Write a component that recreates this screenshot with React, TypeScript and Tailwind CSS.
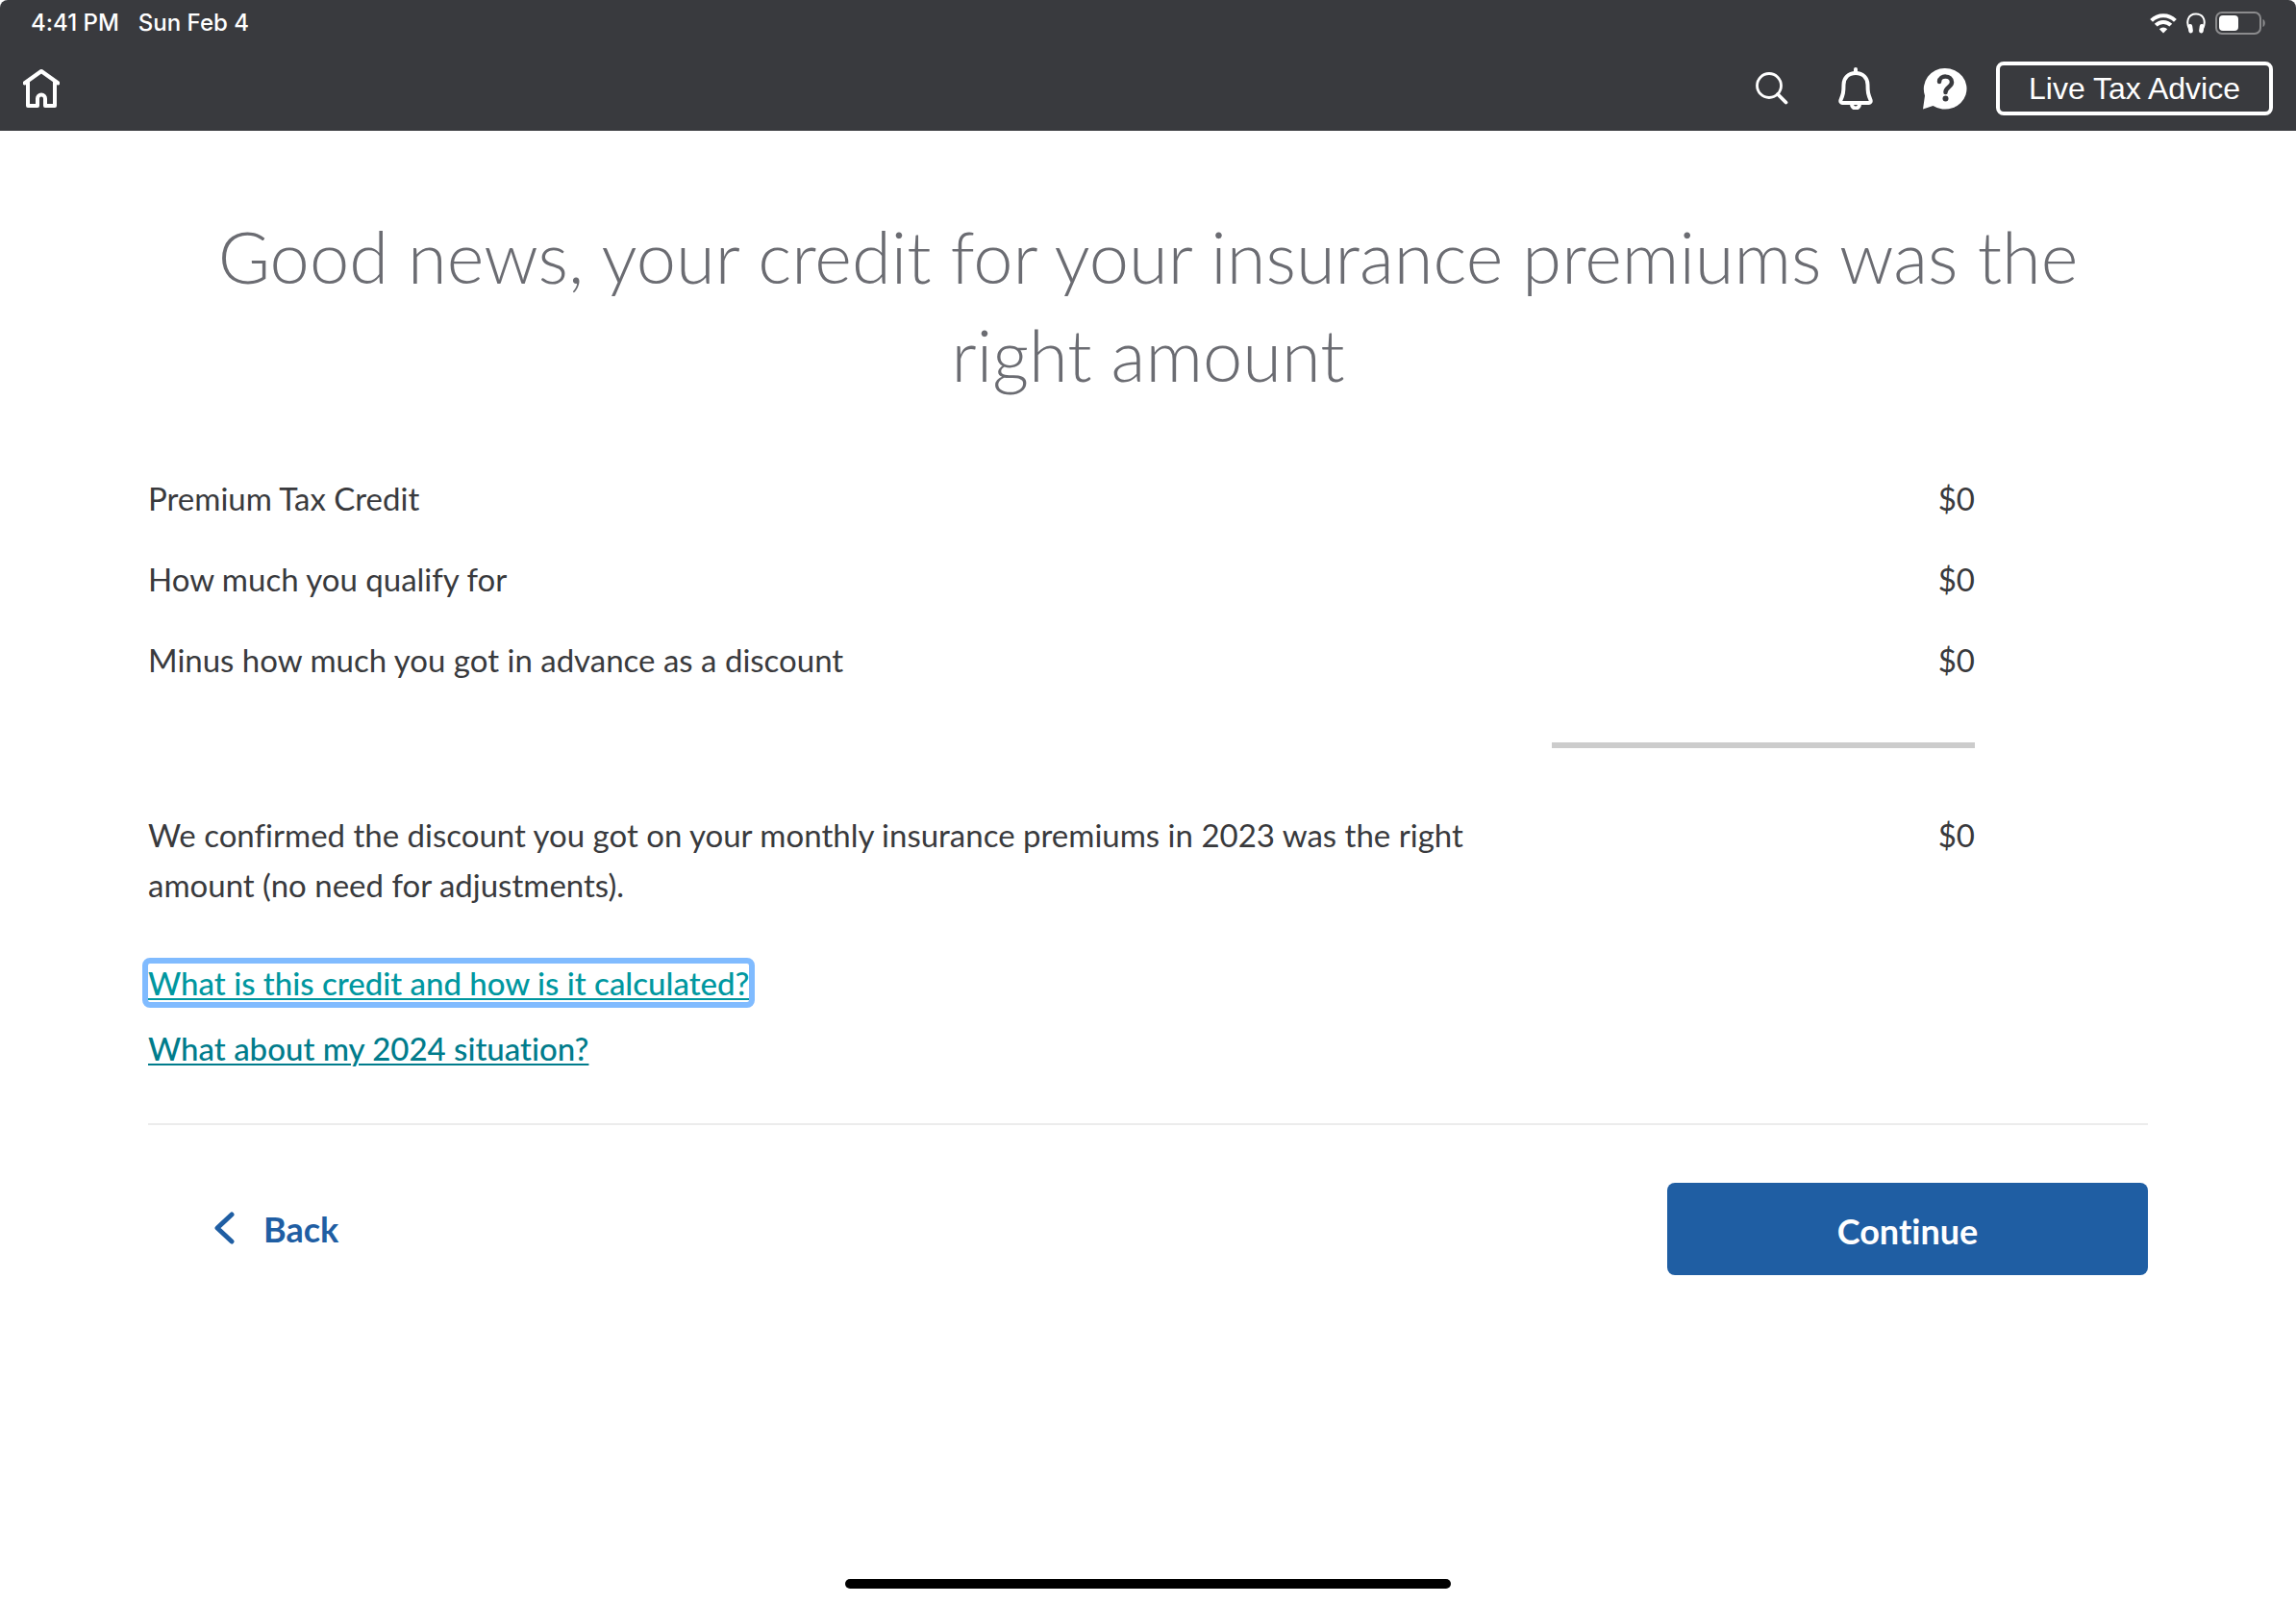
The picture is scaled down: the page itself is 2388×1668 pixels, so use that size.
import React from "react";

const rows = [
  { label: "Premium Tax Credit", amount: "$0" },
  { label: "How much you qualify for", amount: "$0" },
  { label: "Minus how much you got in advance as a discount", amount: "$0" },
];

function StatusBar() {
  return (
    <div className="flex h-12 items-center justify-between pr-8 pl-8 text-2xl">
      <div className="flex items-center gap-5 font-medium font-['Inter',sans-serif]">
        <span>4:41 PM</span>
        <span>Sun Feb 4</span>
      </div>
      <div className="flex items-center gap-2.5">
        <svg width="28" height="22" viewBox="0 0 28 22" aria-label="Wi-Fi" role="img">
          <g fill="none" stroke="#fff" strokeWidth="4">
            <path d="M1.600 8.400a17.600 17.600 0 0 1 24.800 0" />
            <path d="M6.200 13.200a11 11 0 0 1 15.600 0" />
          </g>
          <path d="M14 21.500l-4.200-4.200a6 6 0 0 1 8.400 0z" fill="#fff" />
        </svg>
        <svg width="20" height="22" viewBox="0 0 20 22" aria-label="Headphones" role="img">
          <path d="M3.500 18C-1 10 1.500 1.500 10 1.500S21 10 16.500 18" fill="none" stroke="#fff" strokeWidth="2" />
          <rect x="2" y="12" width="4.600" height="9.500" rx="2.300" fill="#fff" transform="rotate(-8 4 17)" />
          <rect x="13.400" y="12" width="4.600" height="9.500" rx="2.300" fill="#fff" transform="rotate(8 16 17)" />
        </svg>
        <svg width="52" height="24" viewBox="0 0 52 24" aria-label="Battery" role="img">
          <rect x="1" y="1" width="46" height="22" rx="6" fill="none" stroke="#8b8b8d" strokeWidth="2" />
          <rect x="4" y="4" width="20" height="16" rx="4" fill="#fff" />
          <path d="M49.500 8c3 1 3 7 0 8z" fill="#8b8b8d" />
        </svg>
      </div>
    </div>
  );
}

function NavBar() {
  return (
    <nav className="flex h-22 items-center justify-between px-6">
      <button type="button" aria-label="Home">
        <svg width="38" height="40" viewBox="0 0 38 40" fill="none" stroke="#fff" strokeWidth="4" strokeLinecap="round" strokeLinejoin="round">
          <path d="M1.500 14.500L19 2l17.500 12.500" />
          <path d="M5 13v25h10V30.500a4 4 0 0 1 8 0v7.500h10V13" />
        </svg>
      </button>
      <div className="flex items-center">
        <button type="button" aria-label="Search" className="mr-13">
          <svg width="34" height="34" viewBox="0 0 34 34" fill="none" stroke="#fff" strokeLinecap="round">
            <circle cx="14" cy="14" r="12.500" strokeWidth="2.800" />
            <path d="M23 23L31.500 31.500" strokeWidth="3.800" />
          </svg>
        </button>
        <button type="button" aria-label="Notifications" className="mr-13">
          <svg width="36" height="44" viewBox="0 0 36 44" fill="none" stroke="#fff" strokeWidth="4" strokeLinecap="round" strokeLinejoin="round">
            <path d="M18 2v4" />
            <path d="M18 6c-7.500 0-12.500 5-12.500 12 0 8-.5 10-3 16-.5 1.500 0 3 1.500 3h28c1.500 0 2-1.500 1.500-3-2.500-6-3-8-3-16C30.500 11 25.500 6 18 6z" />
            <path d="M14 38.500a4 4 0 0 0 8 0" />
          </svg>
        </button>
        <button type="button" aria-label="Help" className="mr-7.5">
          <svg width="46" height="44" viewBox="0 0 46 44">
            <path d="M23 1a22.500 21.300 0 1 1-12.500 39L0 43.500l2-14A21.500 21.500 0 0 1 23 1z" fill="#fff" />
            <path d="M17 15c.5-7.500 13-7 13 .5 0 5-6.500 5-6.500 10.500" fill="none" stroke="#393a3e" strokeWidth="4.500" strokeLinecap="round" />
            <circle cx="23.500" cy="32.500" r="3" fill="#393a3e" />
          </svg>
        </button>
        <button type="button" className="h-14 rounded-lg border-4 border-white px-7.5 text-[32px] leading-10 font-['Liberation_Sans',Arial,sans-serif]">
          Live Tax Advice
        </button>
      </div>
    </nav>
  );
}

export default function App() {
  return (
    <div className="flex min-h-screen flex-col bg-white font-['Lato',sans-serif] text-[#393a3d] [font-variant-ligatures:none]">
      <header className="rounded-t-lg bg-[#393a3e] text-white">
        <StatusBar />
        <NavBar />
      </header>
      <main className="px-[154px] pt-20">
        <h1 className="px-12 text-center text-[74px] leading-[102px] font-light text-[#6b6c72]">
          Good news, your credit for your insurance premiums was the right amount
        </h1>
        <table className="mt-18 w-full text-[33px] leading-[52px]">
          <tbody>
            {rows.map((row) => (
              <tr key={row.label}>
                <th scope="row" className="pb-8 text-left font-normal">{row.label}</th>
                <td className="w-[440px] pb-8 text-right">{row.amount}</td>
                <td className="w-[180px]" />
              </tr>
            ))}
            <tr>
              <td />
              <td className="pt-7 pb-16"><div className="h-1.5 bg-[#cccccc]" /></td>
              <td />
            </tr>
            <tr className="align-top">
              <th scope="row" className="pr-10 text-left font-normal">
                We confirmed the discount you got on your monthly insurance premiums in 2023 was the right amount (no need for adjustments).
              </th>
              <td className="text-right">$0</td>
              <td />
            </tr>
          </tbody>
        </table>
        <div className="mt-14 flex flex-col items-start gap-7 text-[33px] leading-10 font-medium">
          <a href="#credit" className="rounded-xs text-[#0097a0] underline decoration-2 underline-offset-3 outline-6 outline-[#80bbff]">
            What is this credit and how is it calculated?
          </a>
          <a href="#situation" className="text-[#007c8c] underline decoration-2 underline-offset-3">
            What about my 2024 situation?
          </a>
        </div>
        <div className="mt-[58px] flex items-center justify-between border-t-2 border-[#ececec] pt-15">
          <button type="button" className="ml-17 flex items-center gap-7 text-4xl font-bold text-[#1f5ea3]">
            <svg width="24" height="36" viewBox="0 0 24 36" fill="none" stroke="currentColor" strokeWidth="5" strokeLinecap="round" strokeLinejoin="round">
              <path d="M19 3L4 17l15 14" />
            </svg>
            Back
          </button>
          <button type="button" className="h-24 w-[500px] rounded-lg bg-[#1f5ea3] pt-1 text-4xl font-bold text-white">
            Continue
          </button>
        </div>
      </main>
      <div className="mx-auto mt-auto mb-4 h-2.5 w-[630px] rounded-full bg-black" />
    </div>
  );
}
